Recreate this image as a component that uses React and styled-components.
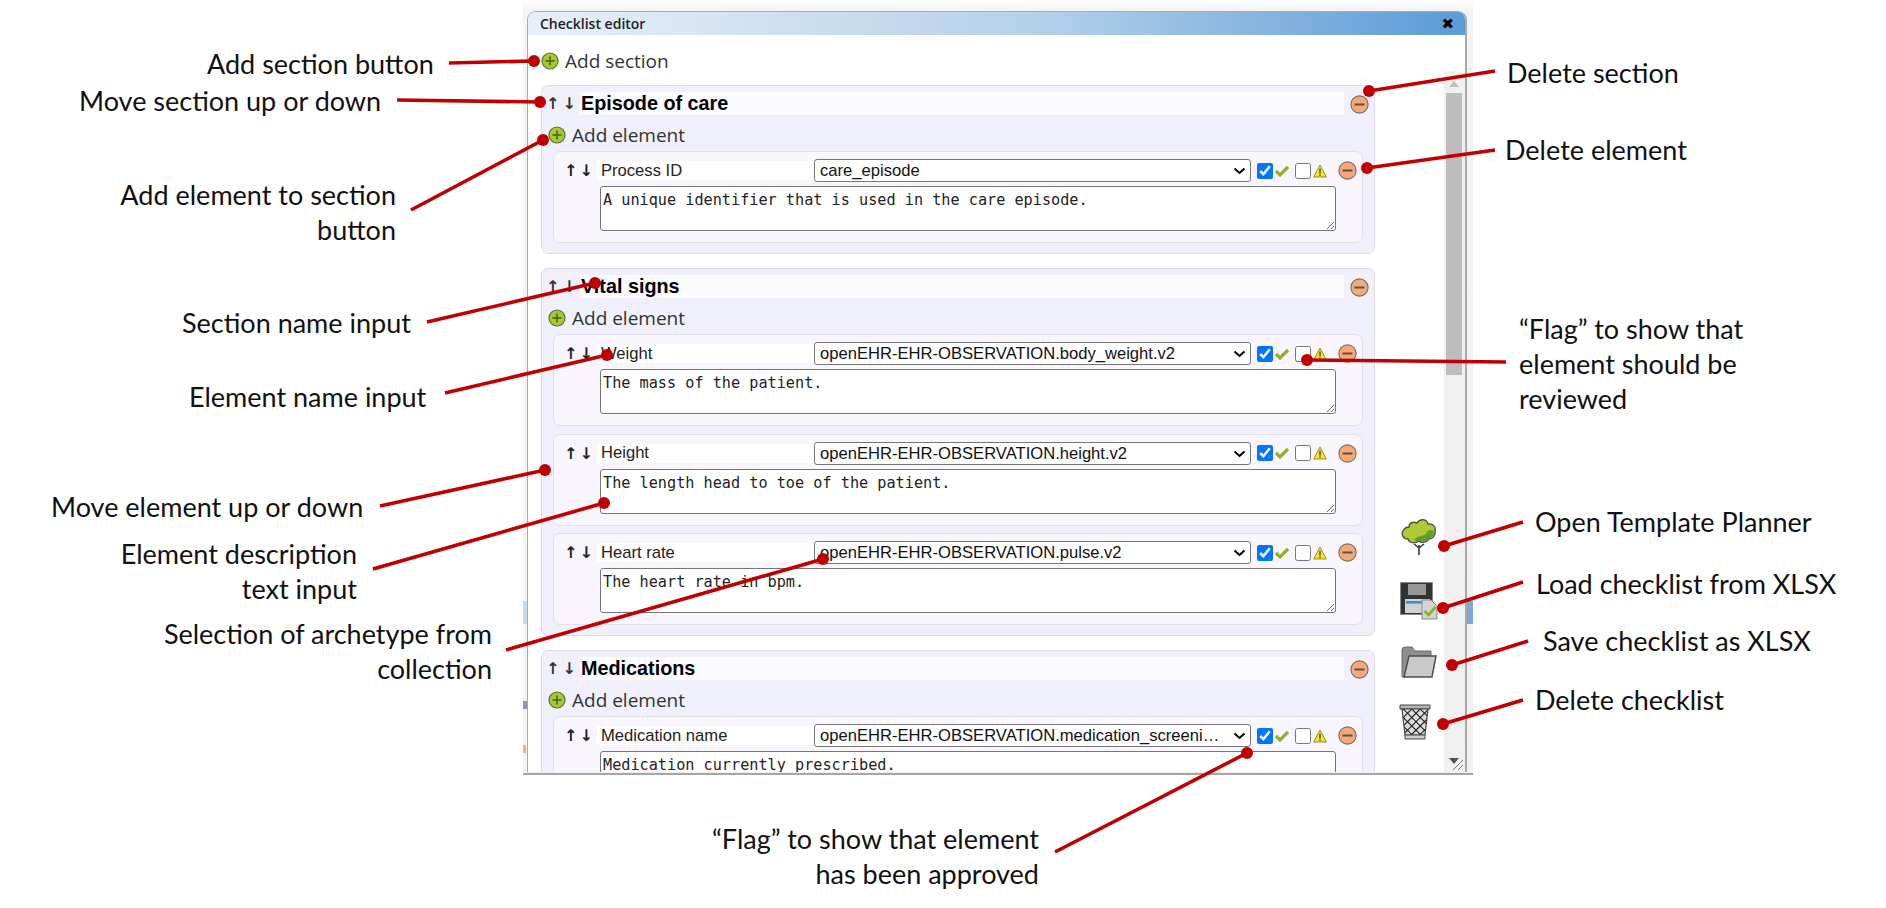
import React from 'react';
import styled, { createGlobalStyle } from 'styled-components';

const GlobalStyle = createGlobalStyle`
  html, body { margin: 0; padding: 0; background: #fff; overflow: hidden; }
`;

const SECTIONS = [
  {
    name: 'Episode of care',
    elements: [
      { name: 'Process ID', archetype: 'care_episode', text: 'A unique identifier that is used in the care episode.' },
    ],
  },
  {
    name: 'Vital signs',
    elements: [
      { name: 'Weight', archetype: 'openEHR-EHR-OBSERVATION.body_weight.v2', text: 'The mass of the patient.' },
      { name: 'Height', archetype: 'openEHR-EHR-OBSERVATION.height.v2', text: 'The length head to toe of the patient.' },
      { name: 'Heart rate', archetype: 'openEHR-EHR-OBSERVATION.pulse.v2', text: 'The heart rate in bpm.' },
    ],
  },
  {
    name: 'Medications',
    elements: [
      { name: 'Medication name', archetype: 'openEHR-EHR-OBSERVATION.medication_screening.v0', text: 'Medication currently prescribed.' },
    ],
  },
];

// callout lines: x1, y1 (label end), x2, y2 (dot)
const CALLOUTS = [
  [449, 63, 534, 61],
  [397, 100, 540, 102],
  [411, 210, 543, 140],
  [427, 322, 595, 283],
  [445, 393, 607, 355],
  [380, 506, 545, 470],
  [373, 569, 604, 503],
  [506, 650, 823, 559],
  [1055, 852, 1247, 753],
  [1495, 71, 1369, 91],
  [1495, 150, 1367, 168],
  [1506, 362, 1307, 360],
  [1523, 522, 1444, 546],
  [1523, 582, 1443, 608],
  [1528, 641, 1452, 665],
  [1523, 700, 1443, 724],
];

const LEFT_LABELS = [
  { x: 207, y: 63, lines: ['Add section button'] },
  { x: 79, y: 100, lines: ['Move section up or down'] },
  { x: 182, y: 322, lines: ['Section name input'] },
  { x: 189, y: 396, lines: ['Element name input'] },
  { x: 51, y: 506, lines: ['Move element up or down'] },
  { x: 1507, y: 72, lines: ['Delete section'] },
  { x: 1505, y: 149, lines: ['Delete element'] },
  { x: 1519, y: 328, lines: ['“Flag” to show that', 'element should be', 'reviewed'] },
  { x: 1535, y: 521, lines: ['Open Template Planner'] },
  { x: 1536, y: 583, lines: ['Load checklist from XLSX'] },
  { x: 1543, y: 640, lines: ['Save checklist as XLSX'] },
  { x: 1535, y: 699, lines: ['Delete checklist'] },
];

const RIGHT_LABELS = [
  { x: 396, y: 194, lines: ['Add element to section', 'button'] },
  { x: 357, y: 553, lines: ['Element description', 'text input'] },
  { x: 492, y: 633, lines: ['Selection of archetype from', 'collection'] },
  { x: 1039, y: 838, lines: ['“Flag” to show that element', 'has been approved'] },
];

const Canvas = styled.div`
  position: relative;
  width: 1886px;
  height: 908px;
  overflow: hidden;
  background: #fff;
`;

const Stage = styled.div`
  display: flex;
  width: 950px;
  height: 775px;
  margin-left: 523px;
  padding: 11px 6px 1px 4px;
  box-sizing: border-box;
  background: linear-gradient(to bottom, #ffffff 0, #f3f3f3 11px, #f1f1f1 100%);
  border-bottom: 2px solid #a6a6a6;
`;

const BackdropPatch = styled.div`
  position: absolute;
  top: ${p => p.$top}px;
  left: ${p => p.$left}px;
  width: ${p => p.$width}px;
  height: ${p => p.$height}px;
  background: ${p => p.$color};
`;

const Window = styled.div`
  flex: 1;
  display: flex;
  flex-direction: column;
  min-width: 0;
  background: #fff;
  border: 1px solid #a9a9a9;
  border-width: 1px 2px 0 1px;
  border-radius: 9px 9px 0 0;
  overflow: hidden;
`;

const TitleBar = styled.div`
  flex: none;
  height: 23px;
  display: flex;
  align-items: center;
  justify-content: space-between;
  padding: 0 11px 0 12px;
  background: linear-gradient(to right, #e9eff9 0%, #b3d0ea 55%, #5c9bd6 100%);
  font: 600 14px "Open Sans", sans-serif;
  color: #222;
`;

const CloseMark = styled.span`
  font: 700 15px "DejaVu Sans", sans-serif;
  color: #000;
`;

const AddRow = styled.div`
  display: flex;
  align-items: center;
  gap: 6px;
  font: 400 19px "Open Sans", sans-serif;
  color: #333;
`;

const TopRow = styled(AddRow)`
  flex: none;
  height: 37px;
  padding: 15px 0 0 13px;
  box-sizing: border-box;
`;

const Body = styled.div`
  flex: 1;
  display: flex;
  min-height: 0;
`;

const List = styled.div`
  flex: none;
  width: 847px;
  padding: 13px 0 0 13px;
  box-sizing: border-box;
  display: flex;
  flex-direction: column;
  gap: 14px;
  overflow: hidden;
`;

const Section = styled.section`
  flex: none;
  padding: 6px 11px 10px;
  background: #f0f0fc;
  border: 1px solid #dcdce4;
  border-radius: 7px;
`;

const SectionHeader = styled.div`
  display: flex;
  align-items: center;
  height: 23px;
  margin-right: -9px;
`;

const SectionArrows = styled.div`
  flex: none;
  width: 34px;
  margin-left: -7px;
  display: flex;
  gap: 3px;
  font: 700 16px "DejaVu Sans", sans-serif;
  color: #333;
`;

const SectionName = styled.input`
  flex: none;
  width: 764px;
  height: 23px;
  box-sizing: border-box;
  border: 0;
  padding: 0 1px;
  outline: 0;
  background: #fafaff;
  font: 700 19.8px "Liberation Sans", sans-serif;
  color: #000;
`;

const SectionDelete = styled.div`
  flex: none;
  margin-left: 6px;
  margin-top: 2px;
  display: flex;
`;

const ElementAdd = styled(AddRow)`
  height: 36px;
  margin-left: -5px;
  padding-top: 4px;
  box-sizing: border-box;
`;

const Elements = styled.div`
  display: flex;
  flex-direction: column;
  gap: 7.5px;
`;

const Card = styled.div`
  height: 92px;
  box-sizing: border-box;
  padding: 7px 0 0 0;
  background: #f8f5fc;
  border: 1px solid #e0dfe8;
  border-radius: 7px;
`;

const CardRow = styled.div`
  display: flex;
  align-items: center;
  height: 23px;
`;

const Arrows = styled.div`
  flex: none;
  width: 43px;
  padding-left: 10px;
  box-sizing: border-box;
  display: flex;
  gap: 2px;
  font: 700 16px "DejaVu Sans", sans-serif;
  color: #222;
`;

const NameInput = styled.input`
  flex: none;
  width: 217px;
  height: 19px;
  box-sizing: border-box;
  border: 0;
  outline: 0;
  padding: 0 4px;
  background: #fff;
  font: 400 16.6px "Liberation Sans", sans-serif;
  color: #222;
`;

const SelectBox = styled.div`
  position: relative;
  flex: none;
  width: 437px;
  height: 23px;
`;

const ArchetypeSelect = styled.select`
  appearance: none;
  width: 100%;
  height: 100%;
  box-sizing: border-box;
  padding: 0 30px 0 5px;
  border: 1px solid #767676;
  border-bottom-width: 1.5px;
  border-radius: 3px;
  background: #fff;
  font: 400 16.6px "Liberation Sans", sans-serif;
  color: #111;
  text-overflow: ellipsis;
  outline: 0;
`;

const Chevron = styled.svg`
  position: absolute;
  right: 5px;
  top: 8px;
  pointer-events: none;
`;

const Flags = styled.div`
  flex: none;
  display: flex;
  align-items: center;
  margin-left: 6px;
`;

const FlagBox = styled.input`
  flex: none;
  width: 16px;
  height: 16px;
  margin: 0;
`;

const FlagIcon = styled.svg`
  flex: none;
  margin: 0 ${p => p.$after}px 0 2px;
`;

const Description = styled.textarea`
  display: block;
  width: 736px;
  height: 45px;
  box-sizing: border-box;
  margin: 4px 0 0 46px;
  padding: 5px 2px 2px;
  border: 1px solid #767676;
  border-radius: 3px;
  outline: 0;
  background: #fff;
  font: 400 15.2px/17px "DejaVu Sans Mono", monospace;
  color: #222;
`;

const Side = styled.div`
  flex: 1;
  display: flex;
  flex-direction: column;
  align-items: center;
  justify-content: flex-end;
  gap: 26px;
  padding: 0 0 32px 18px;
`;

const TrashSvg = styled.svg`
  margin-right: 8px;
`;

const ScrollBar = styled.div`
  position: relative;
  flex: none;
  width: 21px;
  background: #f0f0f0;
`;

const ScrollThumb = styled.div`
  position: absolute;
  top: 21px;
  left: 2px;
  width: 16px;
  height: 282px;
  background: #bdbdbd;
`;

const ScrollArrow = styled.svg`
  position: absolute;
  left: 5px;
  top: ${p => p.$top}px;
`;

const Grip = styled.svg`
  position: absolute;
  right: 1px;
  bottom: 1px;
`;

const Callouts = styled.svg`
  position: absolute;
  inset: 0;
  pointer-events: none;
`;

const Note = styled.div`
  position: absolute;
  top: ${p => p.$y - 17}px;
  ${p => (p.$end ? `right: ${1886 - p.$x}px; text-align: right;` : `left: ${p.$x}px;`)}
  font: 400 27px/35px Lato, sans-serif;
  color: #111;
  white-space: nowrap;
`;

function PlusIcon() {
  return (
    <svg width="18" height="18" viewBox="0 0 18 18">
      <circle cx="9" cy="9" r="8" fill="#a7c92f" stroke="#5e6b3a" strokeWidth="1.2" />
      <path d="M9 4.5v9M4.5 9h9" stroke="#3f5a1e" strokeWidth="1.4" />
    </svg>
  );
}

function MinusIcon() {
  return (
    <svg width="19" height="19" viewBox="0 0 19 19">
      <circle cx="9.5" cy="9.5" r="8.6" fill="#f4a97a" stroke="#7c6a5c" strokeWidth="1.1" />
      <path d="M4.5 9.5h10" stroke="#6e4b33" strokeWidth="2" />
    </svg>
  );
}

function CheckIcon() {
  return (
    <FlagIcon $after={6} width="14" height="12" viewBox="0 0 14 12">
      <path d="M1 6 5 10 13 2" fill="none" stroke="#93ad2f" strokeWidth="3.2" />
    </FlagIcon>
  );
}

function WarnIcon() {
  return (
    <FlagIcon $after={11} width="14" height="14" viewBox="0 0 14 14">
      <path d="M7 1 13.4 13H.6Z" fill="#f5e625" stroke="#8c8430" strokeWidth=".9" />
      <path d="M7 4.5v5M7 10.6v1.4" stroke="#5a5330" strokeWidth="1.5" />
    </FlagIcon>
  );
}

function TreeIcon() {
  return (
    <svg width="36" height="38" viewBox="0 0 36 38">
      <path d="M18 27v10M18 30l-5-4M18 30l5-4" stroke="#333" strokeWidth="1.5" fill="none" />
      <path
        d="M8 9C8 5 12 3 16 5 19 0 26 1 27 6 32 5 35 9 34 13 35 18 31 21 28 21 25 25 20 25 18 23 14 26 8 25 7 21 2 21 0 16 2 13 3 11 5 9 8 9Z"
        fill="#aecb33"
        stroke="#4e5648"
        strokeWidth="1.4"
      />
      <path d="M13 22C18 16 23 20 26 14 28 11 32 12 33 14 33 18 30 20 28 20 25 24 20 24 18 22 16 24 15 23 13 22Z" fill="#5f9e30" />
    </svg>
  );
}

function FloppyIcon() {
  return (
    <svg width="38" height="38" viewBox="0 0 38 38">
      <rect x="0.5" y="0.5" width="32" height="32" fill="#333" stroke="#8a8a8a" strokeWidth="1" />
      <rect x="8" y="2" width="18" height="11" fill="#979797" />
      <rect x="5" y="17" width="25" height="14" fill="#d2d2d2" />
      <rect x="6" y="19" width="17" height="2.6" fill="#3f8fd0" />
      <path d="M22 18h9l6 6v13H22Z" fill="#d4d4d4" stroke="#8a8a8a" strokeWidth="1" />
      <path d="M24.5 29l4 4 7-8" fill="none" stroke="#93ad2f" strokeWidth="2.8" />
    </svg>
  );
}

function FolderIcon() {
  return (
    <svg width="36" height="32" viewBox="0 0 36 32">
      <path d="M1 4Q1 1 4 1H11L14 5H30V11H8L4 31H1Z" fill="#8e8e8e" stroke="#6b6b6b" strokeWidth="1" />
      <path d="M8 10H35L31 31H3Z" fill="#c9c9c9" stroke="#4e4e4e" strokeWidth="1.5" />
    </svg>
  );
}

function TrashIcon() {
  return (
    <TrashSvg width="32" height="36" viewBox="0 0 32 36">
      <defs>
        <pattern id="mesh" width="6" height="6" patternUnits="userSpaceOnUse" patternTransform="rotate(45)">
          <rect width="6" height="6" fill="#dedede" />
          <path d="M0 0H6M0 0V6" stroke="#111" strokeWidth="2.2" />
        </pattern>
      </defs>
      <path d="M1 1H31V5H1Z" fill="#b5b5b5" stroke="#444" strokeWidth="1" />
      <path d="M3 5H29L26 31H6Z" fill="url(#mesh)" stroke="#444" strokeWidth="1.2" />
      <path d="M6 31H26V35H6Z" fill="#cfcfcf" stroke="#444" strokeWidth="1" />
    </TrashSvg>
  );
}

function ElementCard({ element }) {
  return (
    <Card>
      <CardRow>
        <Arrows><span>↑</span><span>↓</span></Arrows>
        <NameInput defaultValue={element.name} />
        <SelectBox>
          <ArchetypeSelect defaultValue={element.archetype}>
            <option>{element.archetype}</option>
          </ArchetypeSelect>
          <Chevron width="13" height="8" viewBox="0 0 13 8">
            <path d="M1.5 1.5 6.5 6 11.5 1.5" fill="none" stroke="#000" strokeWidth="2" />
          </Chevron>
        </SelectBox>
        <Flags>
          <FlagBox type="checkbox" defaultChecked />
          <CheckIcon />
          <FlagBox type="checkbox" />
          <WarnIcon />
          <MinusIcon />
        </Flags>
      </CardRow>
      <Description defaultValue={element.text} />
    </Card>
  );
}

export default function App() {
  return (
    <Canvas>
      <GlobalStyle />
      <Stage>
        <Window>
          <TitleBar>
            Checklist editor
            <CloseMark>✖</CloseMark>
          </TitleBar>
          <TopRow><PlusIcon />Add section</TopRow>
          <Body>
            <List>
              {SECTIONS.map(section => (
                <Section key={section.name}>
                  <SectionHeader>
                    <SectionArrows><span>↑</span><span>↓</span></SectionArrows>
                    <SectionName defaultValue={section.name} />
                    <SectionDelete><MinusIcon /></SectionDelete>
                  </SectionHeader>
                  <ElementAdd><PlusIcon />Add element</ElementAdd>
                  <Elements>
                    {section.elements.map(el => <ElementCard key={el.name} element={el} />)}
                  </Elements>
                </Section>
              ))}
            </List>
            <Side>
              <TreeIcon />
              <FloppyIcon />
              <FolderIcon />
              <TrashIcon />
            </Side>
            <ScrollBar>
              <ScrollArrow $top={9} width="10" height="6" viewBox="0 0 10 6"><path d="M5 0 10 6H0Z" fill="#bdbdbd" /></ScrollArrow>
              <ScrollThumb />
              <ScrollArrow $top={686} width="10" height="6" viewBox="0 0 10 6"><path d="M5 6 10 0H0Z" fill="#555" /></ScrollArrow>
              <Grip width="12" height="12" viewBox="0 0 12 12"><path d="M11 1 1 11M11 6 6 11" stroke="#777" strokeWidth="1" /></Grip>
            </ScrollBar>
          </Body>
        </Window>
      </Stage>
      <BackdropPatch $top={601} $left={523} $width={4} $height={23} $color="#c9d9ec" />
      <BackdropPatch $top={701} $left={523} $width={4} $height={8} $color="#8d99a6" />
      <BackdropPatch $top={745} $left={523} $width={3} $height={8} $color="#e8b48c" />
      <BackdropPatch $top={601} $left={1467} $width={6} $height={23} $color="#7ba7d4" />
      <Callouts width="1886" height="908" viewBox="0 0 1886 908">
        {CALLOUTS.map(([x1, y1, x2, y2]) => (
          <g key={`${x2}-${y2}`}>
            <line x1={x1} y1={y1} x2={x2} y2={y2} stroke="#c00000" strokeWidth="3.6" />
            <circle cx={x2} cy={y2} r="6" fill="#c00000" />
          </g>
        ))}
      </Callouts>
      {LEFT_LABELS.map(label => (
        <Note key={label.lines[0]} $x={label.x} $y={label.y}>
          {label.lines.map(line => <div key={line}>{line}</div>)}
        </Note>
      ))}
      {RIGHT_LABELS.map(label => (
        <Note key={label.lines[0]} $x={label.x} $y={label.y} $end>
          {label.lines.map(line => <div key={line}>{line}</div>)}
        </Note>
      ))}
    </Canvas>
  );
}
